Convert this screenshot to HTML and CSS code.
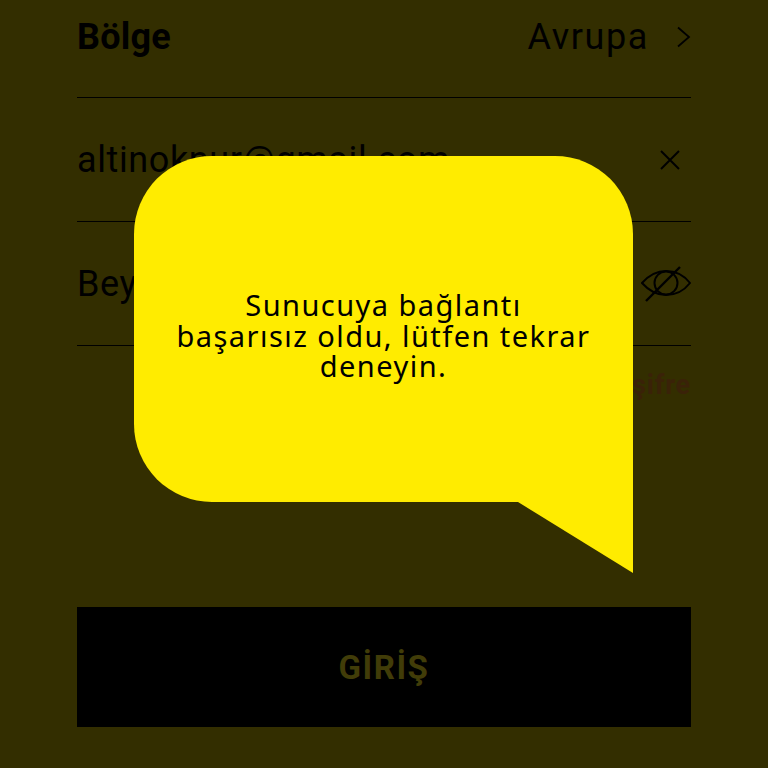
FILE: index.html
```html
<!DOCTYPE html>
<html lang="tr">
<head>
<meta charset="utf-8">
<title>Giriş</title>
<link rel="stylesheet" href="styles.css">
</head>
<body>
<main class="form">
  <div class="row row-first">
    <span class="label">Bölge</span>
    <span class="value">Avrupa</span>
    <svg class="chevron" width="16" height="24" viewBox="0 0 16 24"><path d="M2 2.500 L13 12 L2 21.500" fill="none" stroke="#000" stroke-width="1.800"/></svg>
  </div>
  <div class="row">
    <span class="field">altinoknur@gmail.com</span>
    <svg class="close" width="22" height="22" viewBox="0 0 22 22"><path d="M2 2 L20 20 M20 2 L2 20" fill="none" stroke="#000" stroke-width="2"/></svg>
  </div>
  <div class="row">
    <span class="field">Beyaz</span>
    <svg class="eye" width="50" height="36" viewBox="0 0 50 36"><path d="M1 17 C9 8 17 5 25 5 C33 5 42 8 49 17 C42 26 33 29 25 29 C17 29 9 26 1 17 Z" fill="none" stroke="#000" stroke-width="2"/><circle cx="25" cy="17" r="11.500" fill="none" stroke="#000" stroke-width="2"/><path d="M5 35 L39 1" fill="none" stroke="#000" stroke-width="2.400"/></svg>
  </div>
  <p class="forgot">Unutulan şifre</p>
  <button class="submit" type="button">GİRİŞ</button>
</main>
<div class="overlay">
  <div class="bubble">
    <p class="message">Sunucuya bağlantı başarısız oldu, lütfen tekrar deneyin.</p>
    <svg class="tail" width="115" height="71" viewBox="0 0 115 71"><path d="M0 0 H115 V71 Z" fill="#ffec00"/></svg>
  </div>
</div>
</body>
</html>
```
FILE: styles.css
```css
html, body {
  margin: 0;
  height: 768px;
  overflow: hidden;
  background: #332e00;
}
body {
  position: relative;
  font-family: Roboto, "Noto Sans", sans-serif;
  color: #000;
}
.form {
  display: flex;
  flex-direction: column;
  padding: 0 77px;
}
.row {
  display: flex;
  align-items: center;
  justify-content: space-between;
  height: 123px;
  border-bottom: 1px solid #000;
  font-size: 36px;
  letter-spacing: 0.600px;
}
.row-first {
  height: 73px;
  padding-bottom: 24px;
}
.label {
  font-weight: 700;
  flex: 1;
  letter-spacing: 0.200px;
}
.value {
  margin-right: 27px;
  letter-spacing: 1.600px;
}
.chevron {
  margin-right: -1px;
}
.close {
  margin-right: 10px;
}
.forgot {
  margin: 24px 0 0;
  height: 30px;
  line-height: 30px;
  text-align: right;
  font-size: 27px;
  font-weight: 700;
  letter-spacing: 0.800px;
  color: #3a2208;
}
.submit {
  margin-top: 207px;
  height: 120px;
  border: 0;
  background: #000;
  color: #413c08;
  font-family: inherit;
  font-size: 33px;
  font-weight: 700;
  letter-spacing: 1.500px;
}
.overlay {
  position: absolute;
  left: 134px;
  top: 156px;
}
.bubble {
  position: relative;
  display: flex;
  align-items: center;
  justify-content: center;
  box-sizing: border-box;
  width: 499px;
  height: 346px;
  padding: 14px 42px 0;
  background: #ffec00;
  border-radius: 78px 78px 0 78px;
}
.message {
  margin: 0;
  font-family: "Noto Sans", sans-serif;
  font-size: 29px;
  line-height: 30.500px;
  letter-spacing: 1.450px;
  text-align: center;
}
.tail {
  position: absolute;
  right: 0;
  top: 100%;
  display: block;
}
```
